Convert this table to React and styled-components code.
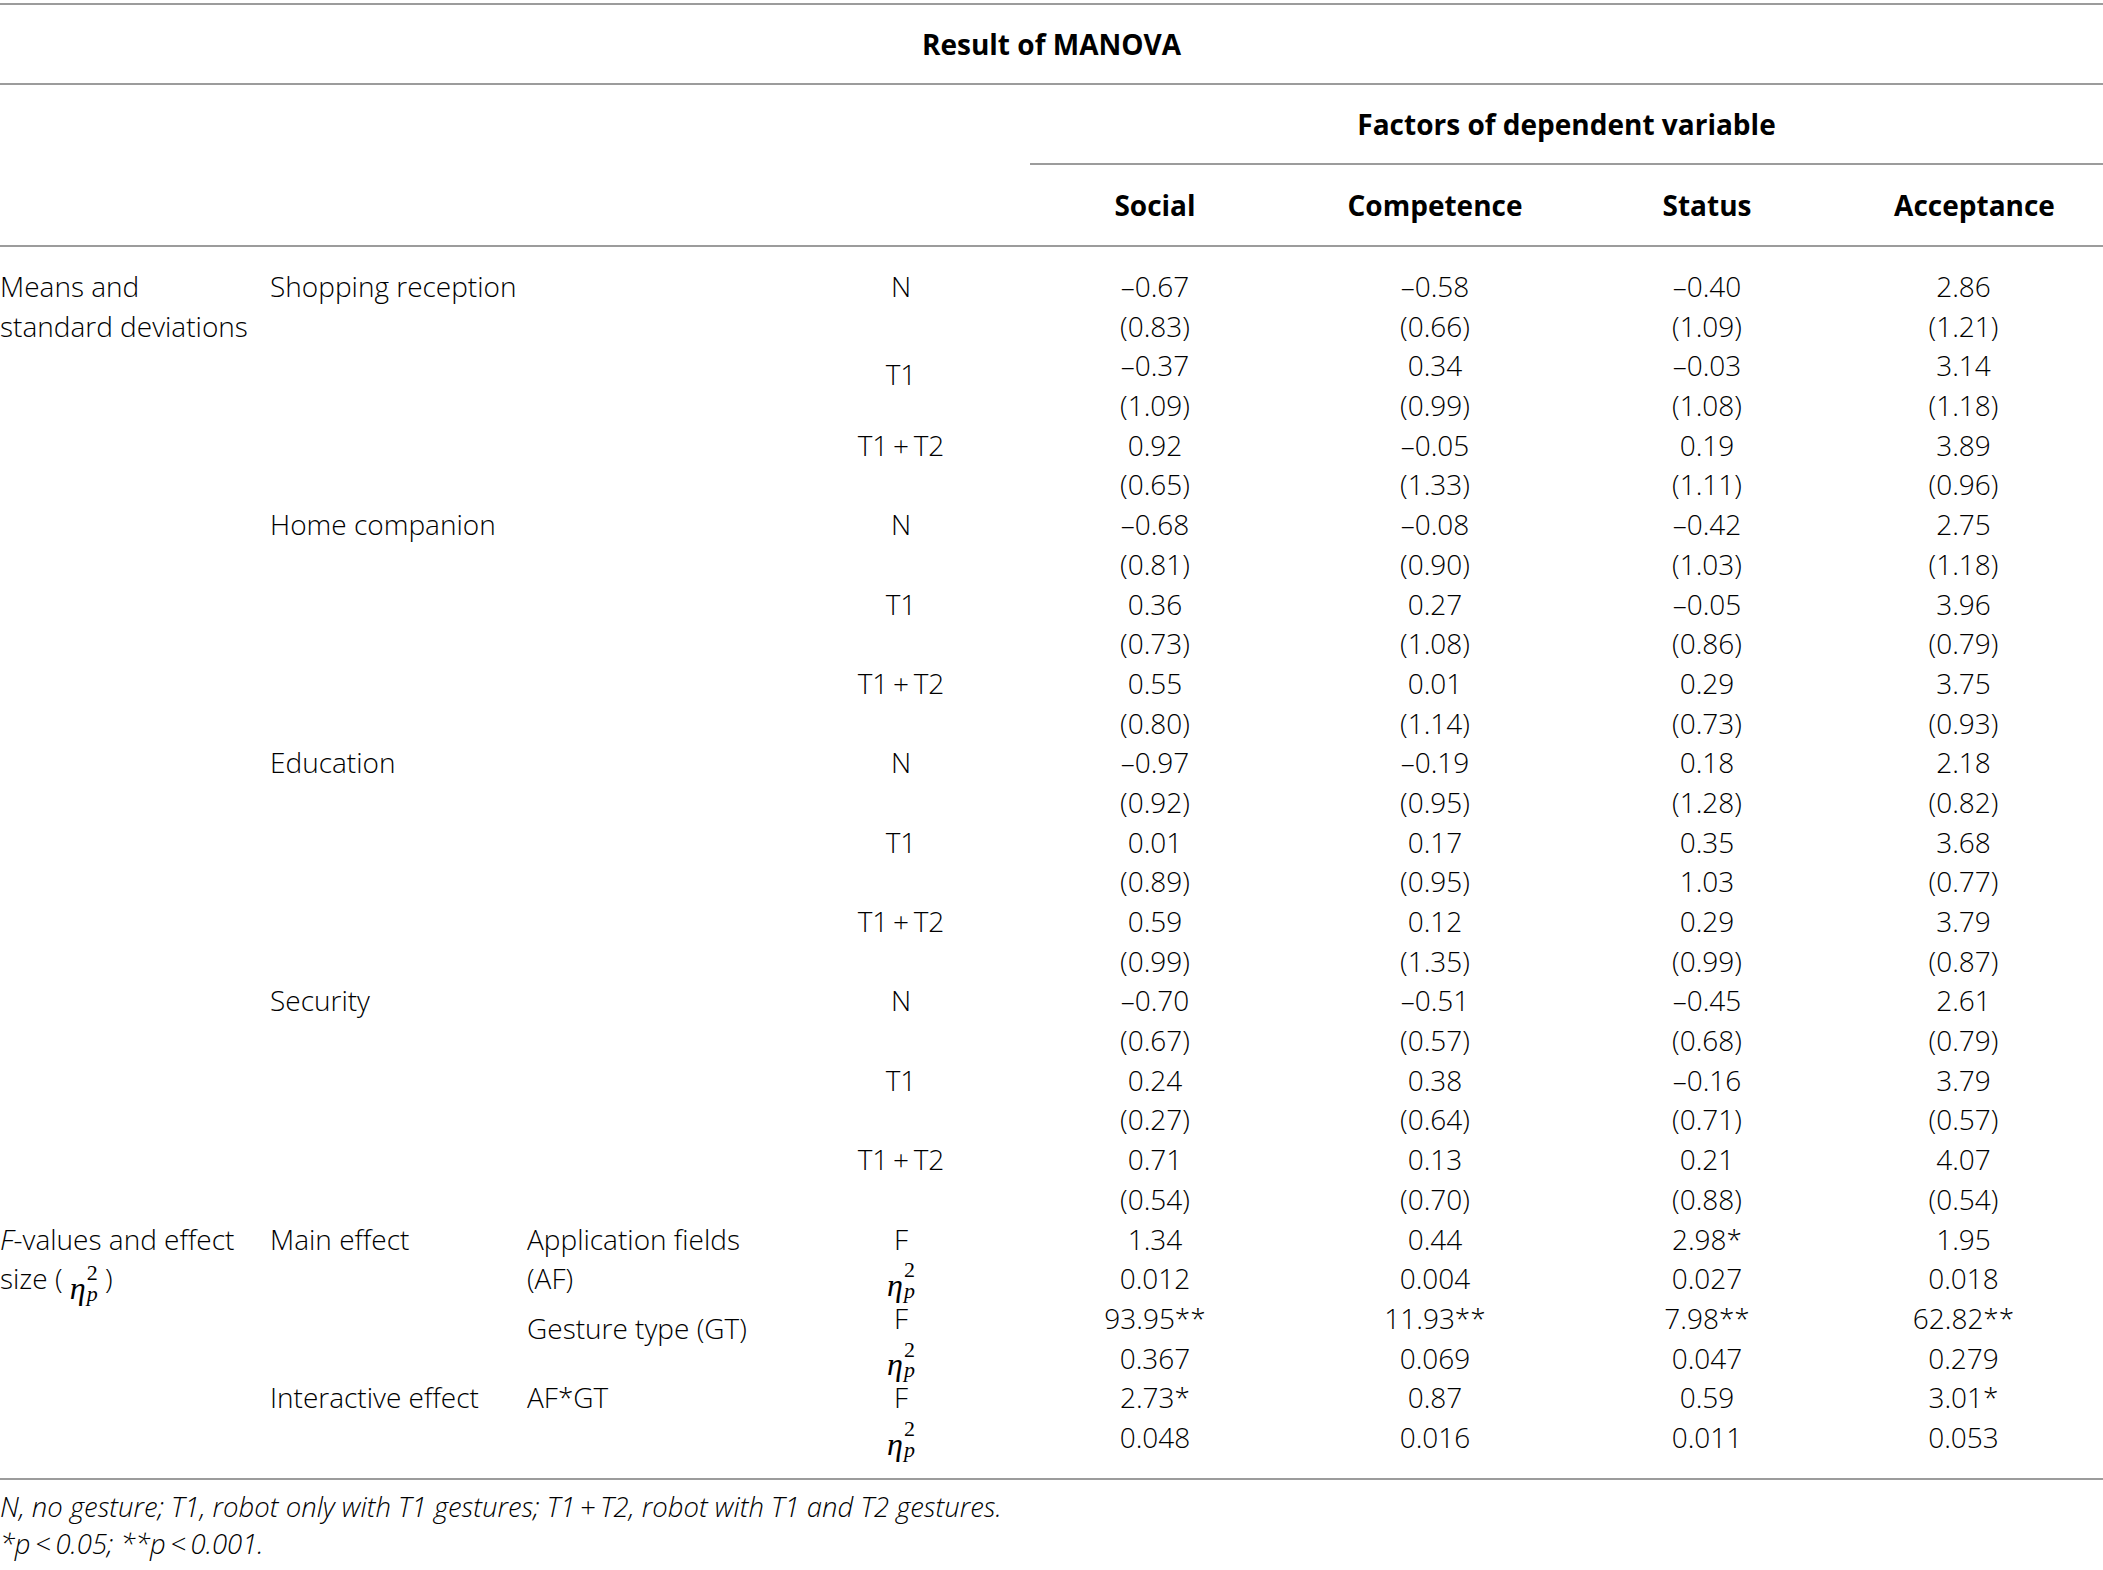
import React from 'react';
import styled, { createGlobalStyle } from 'styled-components';

const GlobalStyle = createGlobalStyle`
  html, body {
    margin: 0;
    padding: 0;
    background: #fff;
    overflow: hidden;
  }
  body {
    font-family: "Open Sans", "Liberation Sans", Arial, sans-serif;
    font-weight: 300;
    color: #000;
  }
`;

const COLUMNS = '270px 257px 245px 258px 250px 310px 234px 279px';
const ROW_H = 39.7;
const LINE = '2px solid #9c9c9c';

const Page = styled.div`
  width: 2103px;
  padding-top: 3px;
`;

const TitleRow = styled.div`
  height: 78px;
  border-top: ${LINE};
  border-bottom: ${LINE};
  display: flex;
  align-items: center;
  justify-content: center;
  font-weight: 700;
  font-size: 28px;
`;

const HeadGrid = styled.div`
  display: grid;
  grid-template-columns: ${COLUMNS};
  height: 80px;
  border-bottom: ${(p) => (p.$line ? LINE : 'none')};
`;

const HeadCell = styled.div`
  grid-column: ${(p) => p.$col};
  display: flex;
  align-items: center;
  justify-content: center;
  padding-left: ${(p) => p.$shift || 0}px;
  font-weight: 700;
  font-size: 28px;
  border-bottom: ${(p) => (p.$line ? LINE : 'none')};
`;

const Body = styled.div`
  display: grid;
  grid-template-columns: ${COLUMNS};
  grid-template-rows: repeat(30, ${ROW_H}px);
  padding: 20px 0 20px;
  border-bottom: ${LINE};
  font-size: 28px;
`;

const Cell = styled.div`
  grid-column: ${(p) => p.$col};
  grid-row: ${(p) => p.$row} / span ${(p) => p.$span || 1};
  display: flex;
  align-items: ${(p) => (p.$top ? 'flex-start' : 'center')};
  justify-content: ${(p) => (p.$left ? 'flex-start' : 'center')};
  padding-top: ${(p) => p.$nudge || 0}px;
  line-height: ${ROW_H}px;
  white-space: nowrap;
`;

const Label = styled.div`
  line-height: ${ROW_H}px;
`;

const EtaWrap = styled.span`
  display: inline-flex;
  align-items: center;
  font-family: "Liberation Serif", "Times New Roman", serif;
  font-weight: 400;
  line-height: 1;
  vertical-align: middle;
`;

const EtaSym = styled.span`
  font-style: italic;
  font-size: 32px;
  transform: translateY(6px);
`;

const Scripts = styled.span`
  display: inline-flex;
  flex-direction: column;
  align-items: center;
  font-size: 22px;
  line-height: 0.95;
  margin-left: 1px;
  transform: translateY(2px);
`;

const Sup = styled.span``;

const Sub = styled.span`
  font-style: italic;
`;

const Notes = styled.div`
  padding-top: 8px;
  font-size: 27.5px;
  font-style: italic;
  line-height: 37px;
`;

const Eta = () => (
  <EtaWrap>
    <EtaSym>η</EtaSym>
    <Scripts>
      <Sup>2</Sup>
      <Sub>p</Sub>
    </Scripts>
  </EtaWrap>
);

const T12 = 'T1\u2009+\u2009T2';

const fields = [
  {
    name: 'Shopping reception',
    rows: [
      ['N', ['–0.67', '–0.58', '–0.40', '2.86'], ['(0.83)', '(0.66)', '(1.09)', '(1.21)']],
      ['T1', ['–0.37', '0.34', '–0.03', '3.14'], ['(1.09)', '(0.99)', '(1.08)', '(1.18)'], 18],
      [T12, ['0.92', '–0.05', '0.19', '3.89'], ['(0.65)', '(1.33)', '(1.11)', '(0.96)']],
    ],
  },
  {
    name: 'Home companion',
    rows: [
      ['N', ['–0.68', '–0.08', '–0.42', '2.75'], ['(0.81)', '(0.90)', '(1.03)', '(1.18)']],
      ['T1', ['0.36', '0.27', '–0.05', '3.96'], ['(0.73)', '(1.08)', '(0.86)', '(0.79)']],
      [T12, ['0.55', '0.01', '0.29', '3.75'], ['(0.80)', '(1.14)', '(0.73)', '(0.93)']],
    ],
  },
  {
    name: 'Education',
    rows: [
      ['N', ['–0.97', '–0.19', '0.18', '2.18'], ['(0.92)', '(0.95)', '(1.28)', '(0.82)']],
      ['T1', ['0.01', '0.17', '0.35', '3.68'], ['(0.89)', '(0.95)', '1.03', '(0.77)']],
      [T12, ['0.59', '0.12', '0.29', '3.79'], ['(0.99)', '(1.35)', '(0.99)', '(0.87)']],
    ],
  },
  {
    name: 'Security',
    rows: [
      ['N', ['–0.70', '–0.51', '–0.45', '2.61'], ['(0.67)', '(0.57)', '(0.68)', '(0.79)']],
      ['T1', ['0.24', '0.38', '–0.16', '3.79'], ['(0.27)', '(0.64)', '(0.71)', '(0.57)']],
      [T12, ['0.71', '0.13', '0.21', '4.07'], ['(0.54)', '(0.70)', '(0.88)', '(0.54)']],
    ],
  },
];

const effects = [
  ['F', ['1.34', '0.44', '2.98*', '1.95']],
  ['eta', ['0.012', '0.004', '0.027', '0.018']],
  ['F', ['93.95**', '11.93**', '7.98**', '62.82**']],
  ['eta', ['0.367', '0.069', '0.047', '0.279']],
  ['F', ['2.73*', '0.87', '0.59', '3.01*']],
  ['eta', ['0.048', '0.016', '0.011', '0.053']],
];

function ValueCells({ row, values }) {
  return values.map((v, i) => (
    <Cell key={i} $col={5 + i} $row={row}>
      {v}
    </Cell>
  ));
}

export default function App() {
  const cells = [];

  cells.push(
    <Cell key="means" $col={1} $row={1} $span={2} $left $top>
      <Label>
        Means and
        <br />
        standard deviations
      </Label>
    </Cell>
  );

  fields.forEach((f, fi) => {
    const base = 1 + fi * 6;
    cells.push(
      <Cell key={'f' + fi} $col={2} $row={base} $left>
        {f.name}
      </Cell>
    );
    f.rows.forEach(([cond, means, sds, nudge], ci) => {
      const r = base + ci * 2;
      cells.push(
        <Cell key={`c${fi}-${ci}`} $col={4} $row={r} $nudge={nudge}>
          {cond}
        </Cell>
      );
      cells.push(<ValueCells key={`m${fi}-${ci}`} row={r} values={means} />);
      cells.push(<ValueCells key={`s${fi}-${ci}`} row={r + 1} values={sds} />);
    });
  });

  cells.push(
    <Cell key="fval" $col={1} $row={25} $span={2} $left $top>
      <Label>
        <i>F</i>-values and effect
        <br />
        size ( <Eta /> )
      </Label>
    </Cell>,
    <Cell key="main" $col={2} $row={25} $left>
      Main effect
    </Cell>,
    <Cell key="af" $col={3} $row={25} $span={2} $left $top>
      <Label>
        Application fields
        <br />
        (AF)
      </Label>
    </Cell>,
    <Cell key="gt" $col={3} $row={27} $left $nudge={20}>
      Gesture type (GT)
    </Cell>,
    <Cell key="inter" $col={2} $row={29} $left>
      Interactive effect
    </Cell>,
    <Cell key="afgt" $col={3} $row={29} $left>
      AF*GT
    </Cell>
  );

  effects.forEach(([kind, vals], i) => {
    const r = 25 + i;
    cells.push(
      <Cell key={'k' + i} $col={4} $row={r}>
        {kind === 'F' ? 'F' : <Eta />}
      </Cell>
    );
    cells.push(<ValueCells key={'e' + i} row={r} values={vals} />);
  });

  return (
    <Page>
      <GlobalStyle />
      <TitleRow>Result of MANOVA</TitleRow>
      <HeadGrid>
        <HeadCell $col="5 / -1" $line>
          Factors of dependent variable
        </HeadCell>
      </HeadGrid>
      <HeadGrid $line>
        <HeadCell $col={5}>Social</HeadCell>
        <HeadCell $col={6}>Competence</HeadCell>
        <HeadCell $col={7}>Status</HeadCell>
        <HeadCell $col={8} $shift={22}>
          Acceptance
        </HeadCell>
      </HeadGrid>
      <Body>{cells}</Body>
      <Notes>
        N, no gesture; T1, robot only with T1 gestures; {T12}, robot with T1 and T2 gestures.
        <br />
        *p{'\u2009<\u2009'}0.05; **p{'\u2009<\u2009'}0.001.
      </Notes>
    </Page>
  );
}
